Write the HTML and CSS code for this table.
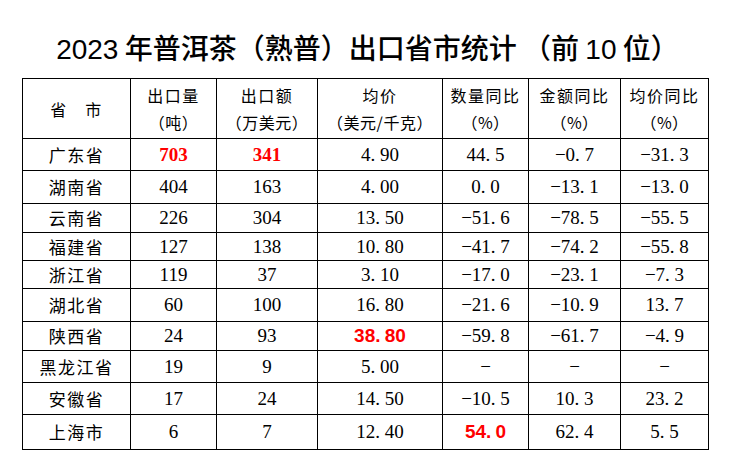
FILE: index.html
```html
<!DOCTYPE html>
<html lang="zh-CN">
<head>
<meta charset="utf-8">
<title>2023年普洱茶（熟普）出口省市统计</title>
<link rel="stylesheet" href="styles.css">
</head>
<body>
<h1 class="title"><span class="num">2023</span> 年普洱茶（熟普）出口省市统计 （前 <span class="num">10</span> 位）</h1>
<table class="stats">
  <colgroup>
    <col class="c1"><col class="c2"><col class="c3"><col class="c4"><col class="c5"><col class="c6"><col class="c7">
  </colgroup>
  <thead>
    <tr class="hd">
      <th>省&#12288;市</th>
      <th><div class="l1">出口量</div><div class="l2">（吨）</div></th>
      <th><div class="l1">出口额</div><div class="l2">（万美元）</div></th>
      <th><div class="l1">均价</div><div class="l2">（美元/千克）</div></th>
      <th><div class="l1">数量同比</div><div class="l2">（%）</div></th>
      <th><div class="l1">金额同比</div><div class="l2">（%）</div></th>
      <th><div class="l1">均价同比</div><div class="l2">（%）</div></th>
    </tr>
  </thead>
  <tbody>
    <tr class="h32"><td class="prov">广东省</td><td class="red rs">703</td><td class="red rs">341</td><td>4<span class="dt">.</span>90</td><td>44<span class="dt">.</span>5</td><td>−0<span class="dt">.</span>7</td><td>−31<span class="dt">.</span>3</td></tr>
    <tr class="h33"><td class="prov">湖南省</td><td>404</td><td>163</td><td>4<span class="dt">.</span>00</td><td>0<span class="dt">.</span>0</td><td>−13<span class="dt">.</span>1</td><td>−13<span class="dt">.</span>0</td></tr>
    <tr class="h29"><td class="prov">云南省</td><td>226</td><td>304</td><td>13<span class="dt">.</span>50</td><td>−51<span class="dt">.</span>6</td><td>−78<span class="dt">.</span>5</td><td>−55<span class="dt">.</span>5</td></tr>
    <tr class="h28"><td class="prov">福建省</td><td>127</td><td>138</td><td>10<span class="dt">.</span>80</td><td>−41<span class="dt">.</span>7</td><td>−74<span class="dt">.</span>2</td><td>−55<span class="dt">.</span>8</td></tr>
    <tr class="h28"><td class="prov">浙江省</td><td>119</td><td>37</td><td>3<span class="dt">.</span>10</td><td>−17<span class="dt">.</span>0</td><td>−23<span class="dt">.</span>1</td><td>−7<span class="dt">.</span>3</td></tr>
    <tr class="h33"><td class="prov">湖北省</td><td>60</td><td>100</td><td>16<span class="dt">.</span>80</td><td>−21<span class="dt">.</span>6</td><td>−10<span class="dt">.</span>9</td><td>13<span class="dt">.</span>7</td></tr>
    <tr class="h29"><td class="prov">陕西省</td><td>24</td><td>93</td><td class="red ss">38<span class="dt">.</span>80</td><td>−59<span class="dt">.</span>8</td><td>−61<span class="dt">.</span>7</td><td>−4<span class="dt">.</span>9</td></tr>
    <tr class="h32"><td class="prov">黑龙江省</td><td>19</td><td>9</td><td>5<span class="dt">.</span>00</td><td>−</td><td>−</td><td>−</td></tr>
    <tr class="h32"><td class="prov">安徽省</td><td>17</td><td>24</td><td>14<span class="dt">.</span>50</td><td>−10<span class="dt">.</span>5</td><td>10<span class="dt">.</span>3</td><td>23<span class="dt">.</span>2</td></tr>
    <tr class="h36"><td class="prov">上海市</td><td>6</td><td>7</td><td>12<span class="dt">.</span>40</td><td class="red ss">54<span class="dt">.</span>0</td><td>62<span class="dt">.</span>4</td><td>5<span class="dt">.</span>5</td></tr>
  </tbody>
</table>
</body>
</html>
```
FILE: styles.css
```css
html, body {
  margin: 0;
  padding: 0;
  background: #ffffff;
}
body {
  width: 735px;
  height: 473px;
  overflow: hidden;
  color: #000;
  font-family: "Liberation Serif", "Noto Sans CJK SC", serif;
}
.title {
  margin: 0;
  padding-top: 32px;
  height: 78px;
  box-sizing: border-box;
  text-align: center;
  font-family: "Noto Sans CJK SC", sans-serif;
  font-weight: 500;
  font-size: 28px;
  line-height: 30px;
  color: #000;
}
.title .num {
  font-family: "Liberation Sans Narrow", "Liberation Sans", sans-serif;
  font-weight: 400;
}
.stats {
  margin-left: 22px;
  margin-top: 0;
  border-collapse: collapse;
  table-layout: fixed;
  width: 687px;
}
.c1 { width: 108px; }
.c2 { width: 86px; }
.c3 { width: 101px; }
.c4 { width: 125px; }
.c5 { width: 86px; }
.c6 { width: 92px; }
.c7 { width: 88px; }
.stats th, .stats td {
  border: 1px solid #000;
  padding: 0;
  text-align: center;
  vertical-align: middle;
}
.stats th {
  font-family: "Noto Sans CJK SC", sans-serif;
  font-weight: 400;
  font-size: 16px;
  letter-spacing: 1.5px;
}
.hd { height: 60px; }
.hd .l1 { line-height: 26px; }
.hd .l2 { line-height: 28px; letter-spacing: 0.5px; }
.stats td {
  font-size: 19px;
  line-height: 20px;
}
.stats td.prov {
  font-family: "Noto Sans CJK SC", sans-serif;
  font-size: 17px;
  letter-spacing: 1.5px;
}
.dt {
  display: inline-block;
  width: 0.5em;
  text-align: left;
}
.red { color: #ff0000; }
.rs { font-weight: 700; }
.ss {
  font-family: "Liberation Sans", sans-serif;
  font-weight: 700;
  font-size: 18px;
}
.h28 { height: 28px; }
.h29 { height: 29px; }
.h32 { height: 32px; }
.h33 { height: 33px; }
.h36 { height: 35px; }
```
